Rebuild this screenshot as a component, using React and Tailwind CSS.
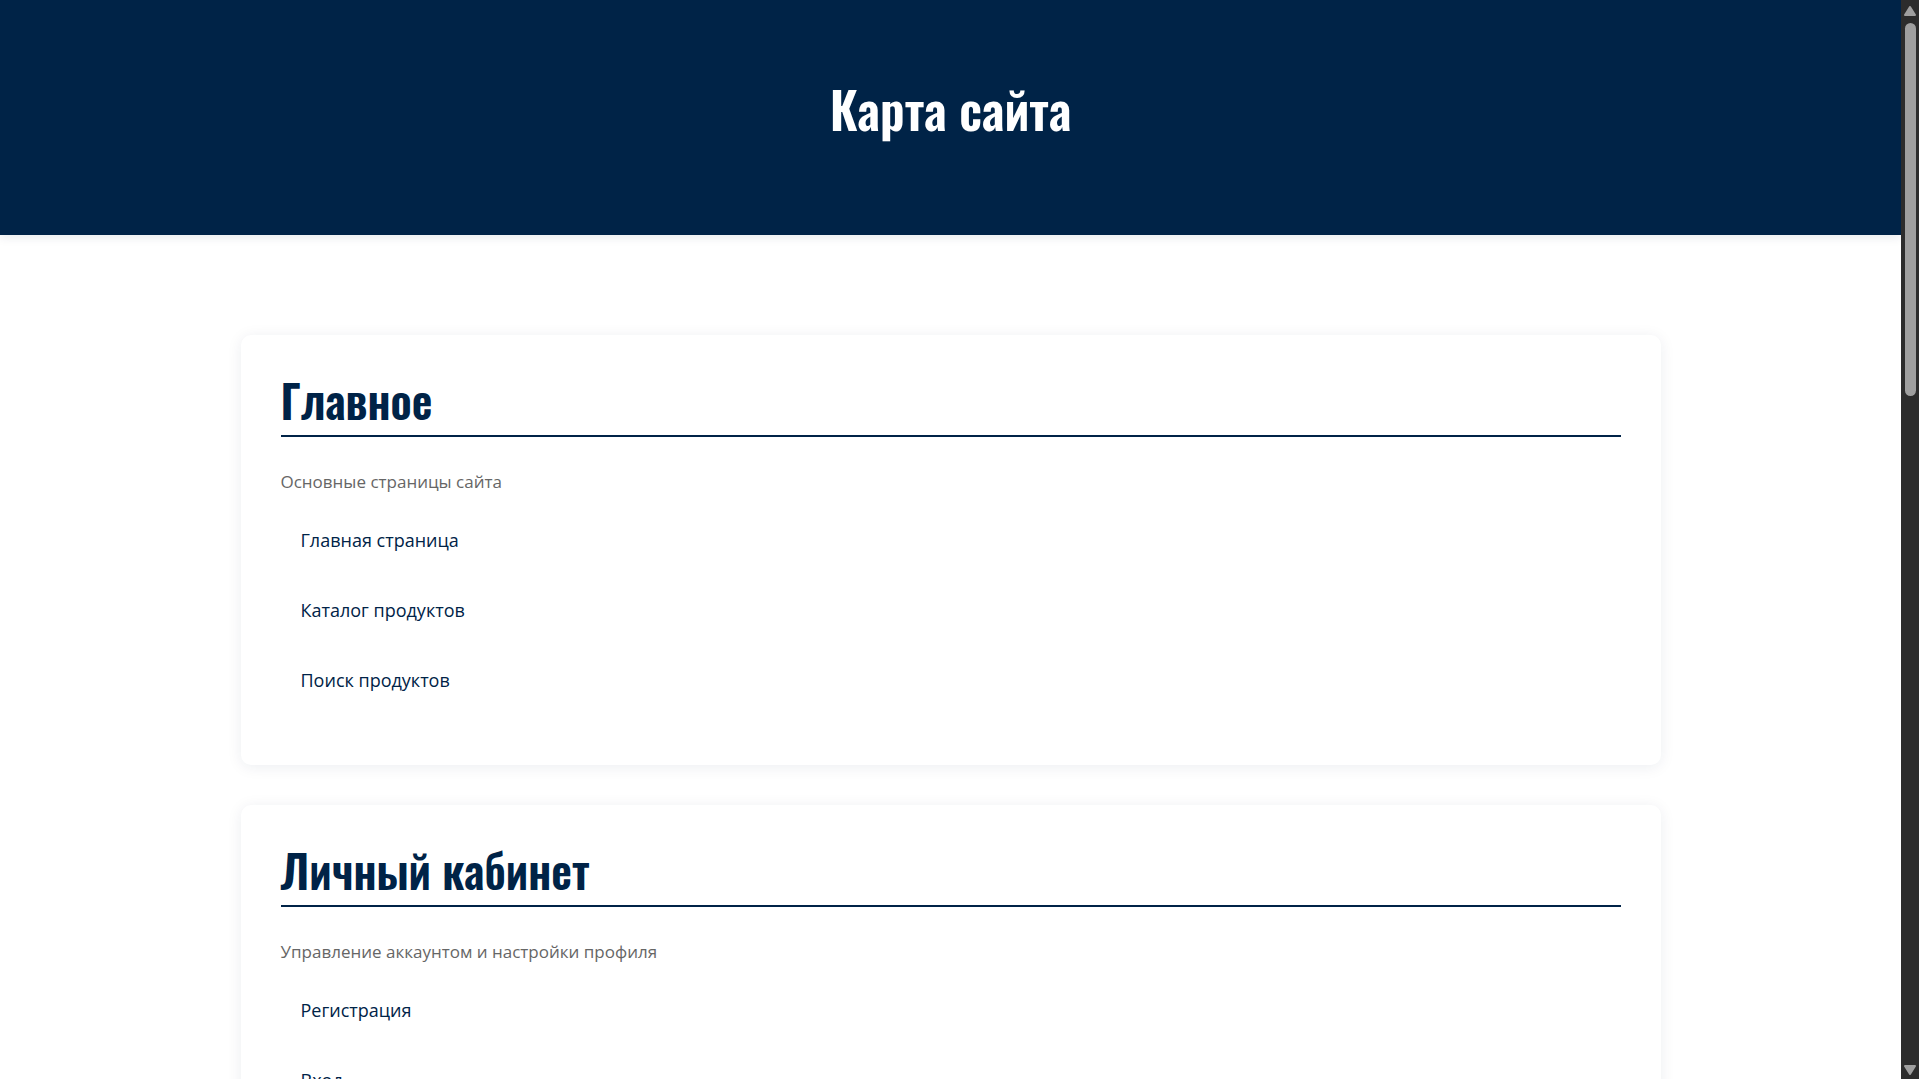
import React from 'react';

const sections = [
  {
    title: 'Главное',
    description: 'Основные страницы сайта',
    links: ['Главная страница', 'Каталог продуктов', 'Поиск продуктов'],
  },
  {
    title: 'Личный кабинет',
    description: 'Управление аккаунтом и настройки профиля',
    links: ['Регистрация', 'Вход'],
  },
];

function Section({ title, description, links }) {
  return (
    <section className="rounded-[10px] bg-white px-10 pt-10 pb-11 shadow-[0_2px_15px_rgba(0,35,71,0.08)]">
      <h2 className="border-b-2 border-[#002347] pb-[10px] font-['Oswald','Roboto_Condensed',sans-serif] text-[45px] leading-[50px] font-semibold text-[#002347]">
        {title}
      </h2>
      <p className="mt-8 text-[17px] leading-[26px] text-[#666666]">{description}</p>
      <ul className="mt-4">
        {links.map((link) => (
          <li key={link} className="mb-3">
            <a href="#" className="block rounded-md px-5 py-[15px] text-[18px] leading-7 text-[#002347]">
              {link}
            </a>
          </li>
        ))}
      </ul>
    </section>
  );
}

function Scrollbar() {
  return (
    <div aria-hidden="true" className="flex w-[18px] shrink-0 flex-col items-center bg-[#2c2c2c] pt-[6px] pb-1">
      <svg className="h-[10px] w-3 shrink-0" viewBox="0 0 12 10">
        <path d="M6 1 11 9H1Z" fill="#9f9f9f" stroke="#9f9f9f" strokeWidth="2" strokeLinejoin="round" />
      </svg>
      <div className="flex w-full flex-1 justify-center py-[7px]">
        <div className="h-[36%] w-[11px] rounded-full bg-[#9f9f9f]" />
      </div>
      <svg className="h-[10px] w-3 shrink-0" viewBox="0 0 12 10">
        <path d="M6 9 1 1H11Z" fill="#9f9f9f" stroke="#9f9f9f" strokeWidth="2" strokeLinejoin="round" />
      </svg>
    </div>
  );
}

export default function App() {
  return (
    <div className="flex h-screen overflow-hidden bg-white font-['Open_Sans','Noto_Sans',sans-serif]">
      <div className="min-w-0 flex-1 overflow-hidden">
        <header className="bg-[#002347] pt-[78px] pb-[97px] text-center shadow-[0_2px_10px_rgba(0,35,71,0.1)]">
          <h1 className="font-['Oswald','Roboto_Condensed',sans-serif] text-[50px] leading-[60px] font-semibold text-white">
            Карта сайта
          </h1>
        </header>
        <main className="mx-auto flex max-w-[1500px] flex-col gap-10 px-10 py-[100px]">
          {sections.map((section) => (
            <Section key={section.title} {...section} />
          ))}
        </main>
      </div>
      <Scrollbar />
    </div>
  );
}
